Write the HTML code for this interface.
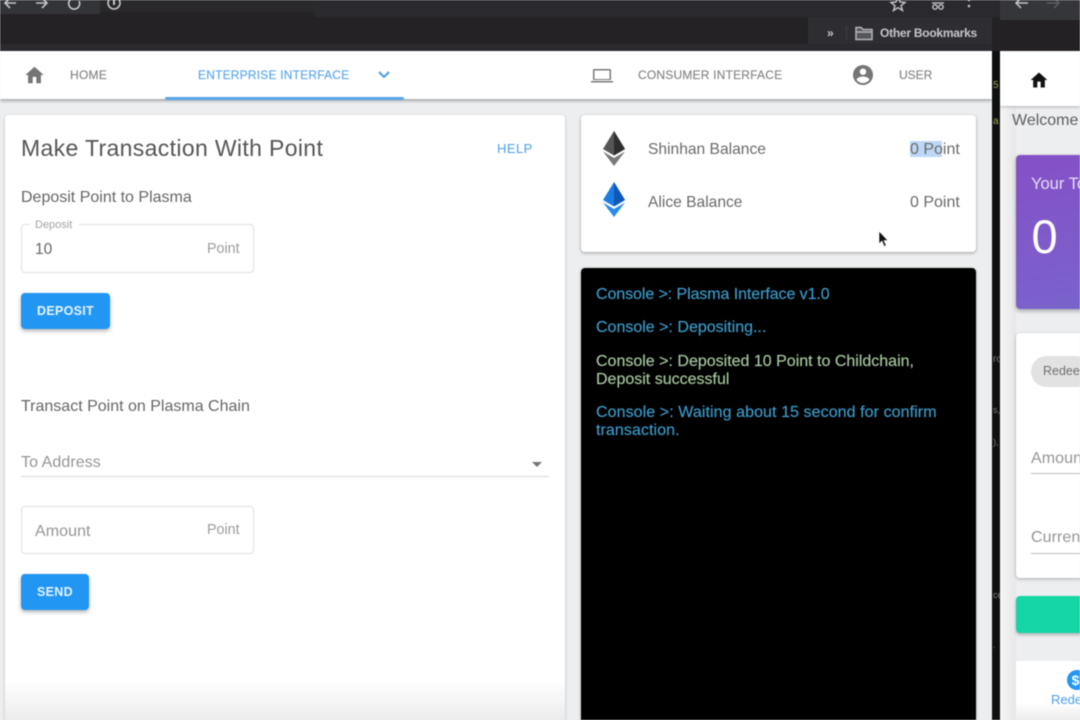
<!DOCTYPE html>
<html><head><meta charset="utf-8"><style>
html,body{margin:0;padding:0;width:1080px;height:720px;overflow:hidden;background:#eceef0}
body{font-family:"Liberation Sans",sans-serif;position:relative}
#r{position:absolute;inset:0;width:1080px;height:720px;overflow:hidden;filter:blur(.4px)}
.a{position:absolute}
.t{position:absolute;white-space:nowrap;line-height:20px}
.nav{font-size:12px;letter-spacing:.28px;color:#858585;font-weight:400;-webkit-text-stroke:.15px #858585}
.g{color:#666;font-size:16px}
.b{font-size:15.6px;color:#6a6a6a}
.p{font-size:16px;color:#6a6a6a}
.h{font-size:16px;color:#959595;letter-spacing:.07px}
.pt{font-size:14.3px;color:#9c9c9c}
.c{position:absolute;left:596px;font-size:16px;line-height:17.5px;white-space:nowrap;color:#3c9ccb;-webkit-text-stroke:.15px currentColor}
.box{position:absolute;background:#fff;border:1px solid #dedede;border-radius:4px;box-sizing:border-box}
.btn{position:absolute;background:#2196f3;border-radius:4px;color:#e6f4ff;font-weight:700;font-size:12.5px;letter-spacing:.3px;text-align:center;box-shadow:0 2px 4px rgba(0,0,0,.3)}
</style></head><body><div id="r">
<!-- browser chrome -->
<div class="a" style="left:0;top:0;width:1080px;height:51px;background:#252225"></div>
<div class="a" style="left:0;top:0;width:100px;height:14px;background:#333438"></div>
<div class="a" style="left:100px;top:0;width:215px;height:12px;background:#29282b"></div>
<div class="a" style="left:315px;top:0;width:685px;height:17px;background:#2a2a2e"></div>
<div class="a" style="left:808px;top:17px;width:184px;height:33px;background:#2e2e32"></div>
<div class="a" style="left:0;top:44px;width:992px;height:7px;background:#2b2a2e"></div>
<div class="a" style="left:1000px;top:0;width:80px;height:20px;background:#35363a"></div>
<div class="a" style="left:1000px;top:20px;width:80px;height:31px;background:#242124"></div>
<svg class="a" style="left:0;top:0" width="130" height="12" fill="none" stroke="#c4c6c9" stroke-width="1.6">
<path d="M16 3H5M10 -2L5 3l5 5"/><path d="M36 3h11M42 -2l5 5-5 5"/>
<path d="M79 1a5.5 5.5 0 1 1-1.8-2"/><circle cx="114" cy="3" r="6"/><path d="M114 0v5" stroke-width="2"/></svg>
<svg class="a" style="left:885px;top:0" width="95" height="12" fill="none" stroke="#c4c6c9" stroke-width="1.4">
<path d="M13 -3l2 5 5 .5-4 3.2 1.5 4.8-4.500-2.800-4.500 2.800 1.500-4.800-4-3.200 5-.5z"/>
<circle cx="50" cy="7" r="2.200"/><circle cx="56" cy="7" r="2.200"/><path d="M47 3h12"/>
<circle cx="84" cy="0" r="1.200" fill="#c4c6c9" stroke="none"/><circle cx="84" cy="6" r="1.300" fill="#c4c6c9" stroke="none"/></svg>
<div class="t" style="left:827px;top:23px;color:#c8cacc;font-size:12px;font-weight:700">»</div>
<div class="a" style="left:846px;top:26px;width:1px;height:14px;background:#3e3f43"></div>
<svg class="a" style="left:855px;top:26px" width="18" height="15" fill="#55565a" stroke="#b4b6b9" stroke-width="1.500"><path d="M1 13.500V1.500h5l2 2h9v10z"/><path d="M1 6h16" /></svg>
<div class="t" style="left:880px;top:23px;color:#c5c7ca;font-size:12px;letter-spacing:-.25px;font-weight:700">Other Bookmarks</div>
<svg class="a" style="left:1012px;top:0" width="55" height="10" fill="none" stroke-width="1.500"><path d="M16 3H4M9 -2L4 3l5 5" stroke="#c4c6c9"/><path d="M35 3h12M42 -2l5 5-5 5" stroke="#5c5d61"/></svg>

<!-- dark divider -->
<div class="a" style="left:992px;top:51px;width:8px;height:669px;background:#0f1012"></div>
<div class="t" style="left:993px;top:112px;color:#a3a74c;font-size:10px">a</div>
<div class="t" style="left:993px;top:76px;color:#a3a74c;font-size:10px">5</div>
<div class="t" style="left:993px;top:350px;color:#7d7f80;font-size:10px">ro</div>
<div class="t" style="left:993px;top:400px;color:#7d7f80;font-size:9px">s,</div>
<div class="t" style="left:993px;top:432px;color:#7d7f80;font-size:9px">),</div>
<div class="t" style="left:993px;top:585px;color:#7d7f80;font-size:9px">ce</div>
<div class="t" style="left:993px;top:635px;color:#7d7f80;font-size:9px">.</div>

<!-- left app nav -->
<div class="a" style="left:0;top:51px;width:992px;height:48px;background:#fff;box-shadow:0 2px 3px rgba(0,0,0,.3)"></div>
<svg class="a" style="left:23px;top:64px" width="23" height="22" viewBox="0 0 24 24" fill="#757575"><path d="M10 21v-7h4v7h5v-9h3L12 3 2 12h3v9z"/></svg>
<div class="t nav" style="left:70px;top:65px">HOME</div>
<div class="t nav" style="left:198px;top:65px;color:#5ba6e8;letter-spacing:.2px;-webkit-text-stroke:.15px #5ba6e8">ENTERPRISE INTERFACE</div>
<svg class="a" style="left:376px;top:69px" width="16" height="12" fill="none" stroke="#4b9be6" stroke-width="2"><path d="M3 3l5 5 5-5"/></svg>
<div class="a" style="left:165px;top:97px;width:239px;height:3px;background:#5aa5e6;border-radius:2px"></div>
<svg class="a" style="left:590px;top:63px" width="24" height="24" viewBox="0 0 24 24" fill="#7a7a7a"><path d="M4 6h16a1 1 0 0 1 1 1v10H3V7a1 1 0 0 1 1-1zm.5 1.500V16h15V7.500zM1 18h22v1.500H1z" fill-rule="evenodd"/></svg>
<div class="t nav" style="left:638px;top:65px;letter-spacing:.2px">CONSUMER INTERFACE</div>
<svg class="a" style="left:851px;top:63px" width="24" height="24" viewBox="0 0 24 24" fill="#757575"><path d="M12 2a10 10 0 1 0 0 20 10 10 0 0 0 0-20zm0 3.500a3.200 3.200 0 1 1 0 6.400 3.200 3.200 0 0 1 0-6.400zM12 20c-2.600 0-5-1.300-6.400-3.300C5.700 14.600 9.900 13.500 12 13.500s6.300 1.100 6.400 3.200C17 18.700 14.600 20 12 20z"/></svg>
<div class="t nav" style="left:899px;top:65px;letter-spacing:0">USER</div>

<!-- left card -->
<div class="a" style="left:5px;top:115px;width:560px;height:640px;background:#fff;border-radius:4px;box-shadow:0 1px 3px rgba(0,0,0,.2)"></div>
<div class="a" style="left:5px;top:680px;width:560px;height:40px;background:linear-gradient(#fff0,#ececec)"></div>
<div class="t" style="left:21px;top:134px;font-size:23px;line-height:28px;color:#555;letter-spacing:.35px">Make Transaction With Point</div>
<div class="t" style="left:497px;top:138px;font-size:13px;color:#4a9fe6;letter-spacing:.45px;line-height:21px">HELP</div>
<div class="t g" style="left:21px;top:188px">Deposit Point to Plasma</div>
<div class="box" style="left:21px;top:224px;width:233px;height:49px"></div>
<div class="a" style="left:30px;top:220px;width:49px;height:8px;background:#fff"></div>
<div class="t" style="left:35px;top:215px;font-size:11px;color:#a2a2a2">Deposit</div>
<div class="t" style="left:35px;top:240px;font-size:15.500px;color:#666">10</div>
<div class="t pt" style="left:207px;top:239px">Point</div>
<div class="btn" style="left:21px;top:293px;width:89px;height:36px;line-height:36px">DEPOSIT</div>
<div class="t g" style="left:21px;top:397px">Transact Point on Plasma Chain</div>
<div class="t h" style="left:21px;top:452.500px">To Address</div>
<div class="a" style="left:532px;top:462px;width:0;height:0;border-left:5px solid transparent;border-right:5px solid transparent;border-top:5px solid #757575"></div>
<div class="a" style="left:21px;top:476px;width:528px;height:1px;background:#d8d8d8"></div>
<div class="box" style="left:21px;top:506px;width:233px;height:48px"></div>
<div class="t h" style="left:35px;top:521.500px">Amount</div>
<div class="t pt" style="left:207px;top:520px">Point</div>
<div class="btn" style="left:21px;top:574px;width:68px;height:36px;line-height:36px">SEND</div>

<!-- balance card -->
<div class="a" style="left:581px;top:115px;width:395px;height:137px;background:#fff;border-radius:4px;box-shadow:0 1px 3px rgba(0,0,0,.35)"></div>
<svg class="a" style="left:603px;top:131px" width="22" height="35" viewBox="0 0 22 35"><path d="M11 0L0 18l11 6.500L22 18z" fill="#555"/><path d="M11 0v24.500L22 18z" fill="#2e2e2e"/><path d="M0 20.500L11 35l11-14.500-11 6.500z" fill="#7a7a7a"/></svg>
<svg class="a" style="left:603px;top:182px" width="22" height="35" viewBox="0 0 22 35"><path d="M11 0L0 18l11 6.500L22 18z" fill="#1b7ee0"/><path d="M11 0v24.500L22 18z" fill="#0f58b8"/><path d="M0 20.500L11 35l11-14.500-11 6.500z" fill="#2a8ce8"/></svg>
<div class="t b" style="left:648px;top:140px">Shinhan Balance</div>
<div class="t b" style="left:648px;top:193px">Alice Balance</div>
<div class="a" style="left:910px;top:141px;width:32px;height:16px;background:#bcd8f6"></div>
<div class="t p" style="left:910px;top:140px">0 Point</div>
<div class="t p" style="left:910px;top:193px">0 Point</div>
<svg class="a" style="left:878px;top:231px" width="11" height="17" viewBox="0 0 11 17"><path d="M1 0v13l3-3 2.200 5.500 2-1L6 9.500h4z" fill="#111" stroke="#fff" stroke-width=".6"/></svg>

<!-- console -->
<div class="a" style="left:581px;top:268px;width:395px;height:470px;background:#000;border-radius:4px;box-shadow:0 1px 3px rgba(0,0,0,.3)"></div>
<div class="c" style="top:285.500px;letter-spacing:-.08px">Console &gt;: Plasma Interface v1.0</div>
<div class="c" style="top:319px">Console &gt;: Depositing...</div>
<div class="c" style="top:353px;color:#a8c8a0">Console &gt;: Deposited 10 Point to Childchain,<br>Deposit successful</div>
<div class="c" style="top:404px;letter-spacing:.08px">Console &gt;: Waiting about 15 second for confirm<br>transaction.</div>

<!-- right window -->
<div class="a" style="left:1000px;top:51px;width:80px;height:669px;background:#eceef0"></div>
<div class="a" style="left:1000px;top:51px;width:16px;height:669px;background:linear-gradient(90deg,#f6f6f6,#e6e7e9)"></div>
<div class="a" style="left:1000px;top:51px;width:80px;height:55px;background:#fff;box-shadow:0 1px 3px rgba(0,0,0,.25)"></div>
<svg class="a" style="left:1029px;top:70px" width="20" height="20" viewBox="0 0 24 24" fill="#111"><path d="M10 21v-7h4v7h5v-9h3L12 3 2 12h3v9z"/></svg>
<div class="t" style="left:1012px;top:111px;font-size:16px;color:#5e5e5e">Welcome</div>
<div class="a" style="left:1016px;top:155px;width:70px;height:154px;border-radius:4px;background:linear-gradient(170deg,#8550c6,#7a63cc);box-shadow:0 2px 4px rgba(0,0,0,.3)"></div>
<div class="t" style="left:1031px;top:174px;font-size:16.500px;color:#e8dcf6">Your To</div>
<div class="t" style="left:1031.500px;top:214px;font-size:47px;line-height:46px;color:#fff">0</div>
<div class="a" style="left:1016px;top:333px;width:70px;height:245px;background:#fff;border-radius:4px;box-shadow:0 1px 3px rgba(0,0,0,.3)"></div>
<div class="a" style="left:1031px;top:356px;width:60px;height:31px;background:#e2e2e2;border-radius:16px"></div>
<div class="t" style="left:1043px;top:361px;font-size:12.500px;color:#707070">Redeem</div>
<div class="t h" style="left:1031px;top:449px">Amount</div>
<div class="a" style="left:1031px;top:473px;width:49px;height:1px;background:#bcbcbc"></div>
<div class="t h" style="left:1031px;top:528px">Currency</div>
<div class="a" style="left:1031px;top:553px;width:49px;height:1px;background:#bcbcbc"></div>
<div class="a" style="left:1016px;top:596px;width:70px;height:37px;background:#15d6a6;border-radius:4px;box-shadow:0 2px 3px rgba(0,0,0,.25)"></div>
<div class="a" style="left:1016px;top:661px;width:64px;height:59px;background:linear-gradient(#fff 70%,#ececec)"></div>
<div class="a" style="left:1067px;top:670px;width:20px;height:20px;border-radius:50%;background:#2196f3;color:#fff;font-size:14px;font-weight:700;line-height:20px;text-align:center;text-indent:-3px">$</div>
<div class="t" style="left:1051px;top:690px;font-size:13px;color:#4a9fe6">Redeem</div>
</div></body></html>
